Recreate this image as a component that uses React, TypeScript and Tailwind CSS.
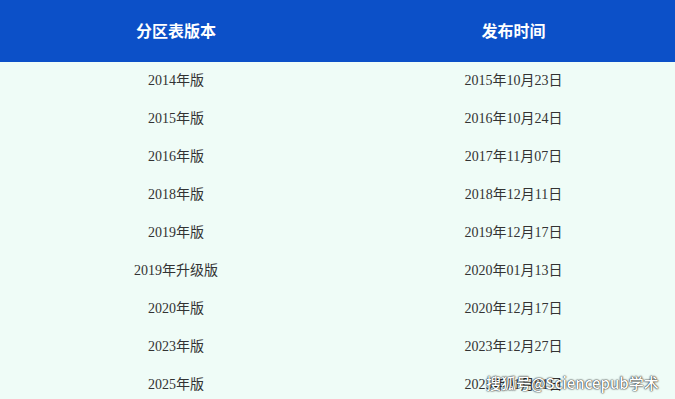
const rows: [string, string][] = [
  ["2014年版", "2015年10月23日"],
  ["2015年版", "2016年10月24日"],
  ["2016年版", "2017年11月07日"],
  ["2018年版", "2018年12月11日"],
  ["2019年版", "2019年12月17日"],
  ["2019年升级版", "2020年01月13日"],
  ["2020年版", "2020年12月17日"],
  ["2023年版", "2023年12月27日"],
  ["2025年版", "2025年01月01日"],
];

export default function App() {
  return (
    <div className="relative w-[675px] h-[399px] overflow-hidden bg-[#effcf7]">
      <div className="flex h-[62px] bg-[#0c50c8] text-white font-bold text-[16px] items-center [font-family:'Noto_Sans_CJK_SC',sans-serif]">
        <div className="w-[352px] text-center pb-[2px]">分区表版本</div>
        <div className="flex-1 text-center pb-[2px]">发布时间</div>
      </div>
      <div className="flex flex-col text-[14px] leading-[20px] text-[#333333] [font-family:'Liberation_Serif','Noto_Sans_CJK_SC',serif]">
        {rows.map(([ver, date]) => (
          <div key={ver} className="flex h-[38px] pt-[9px]">
            <div className="w-[352px] text-center">{ver}</div>
            <div className="flex-1 text-center">{date}</div>
          </div>
        ))}
      </div>
      <div className="absolute left-[486px] top-[373px] text-[15px] leading-[20px] text-white font-medium [font-family:'Noto_Sans_CJK_SC',sans-serif] [text-shadow:0_0_2px_rgba(0,0,0,0.9),0_0_1px_rgba(0,0,0,0.9)]">
        搜狐号@Sciencepub学术
      </div>
    </div>
  );
}
